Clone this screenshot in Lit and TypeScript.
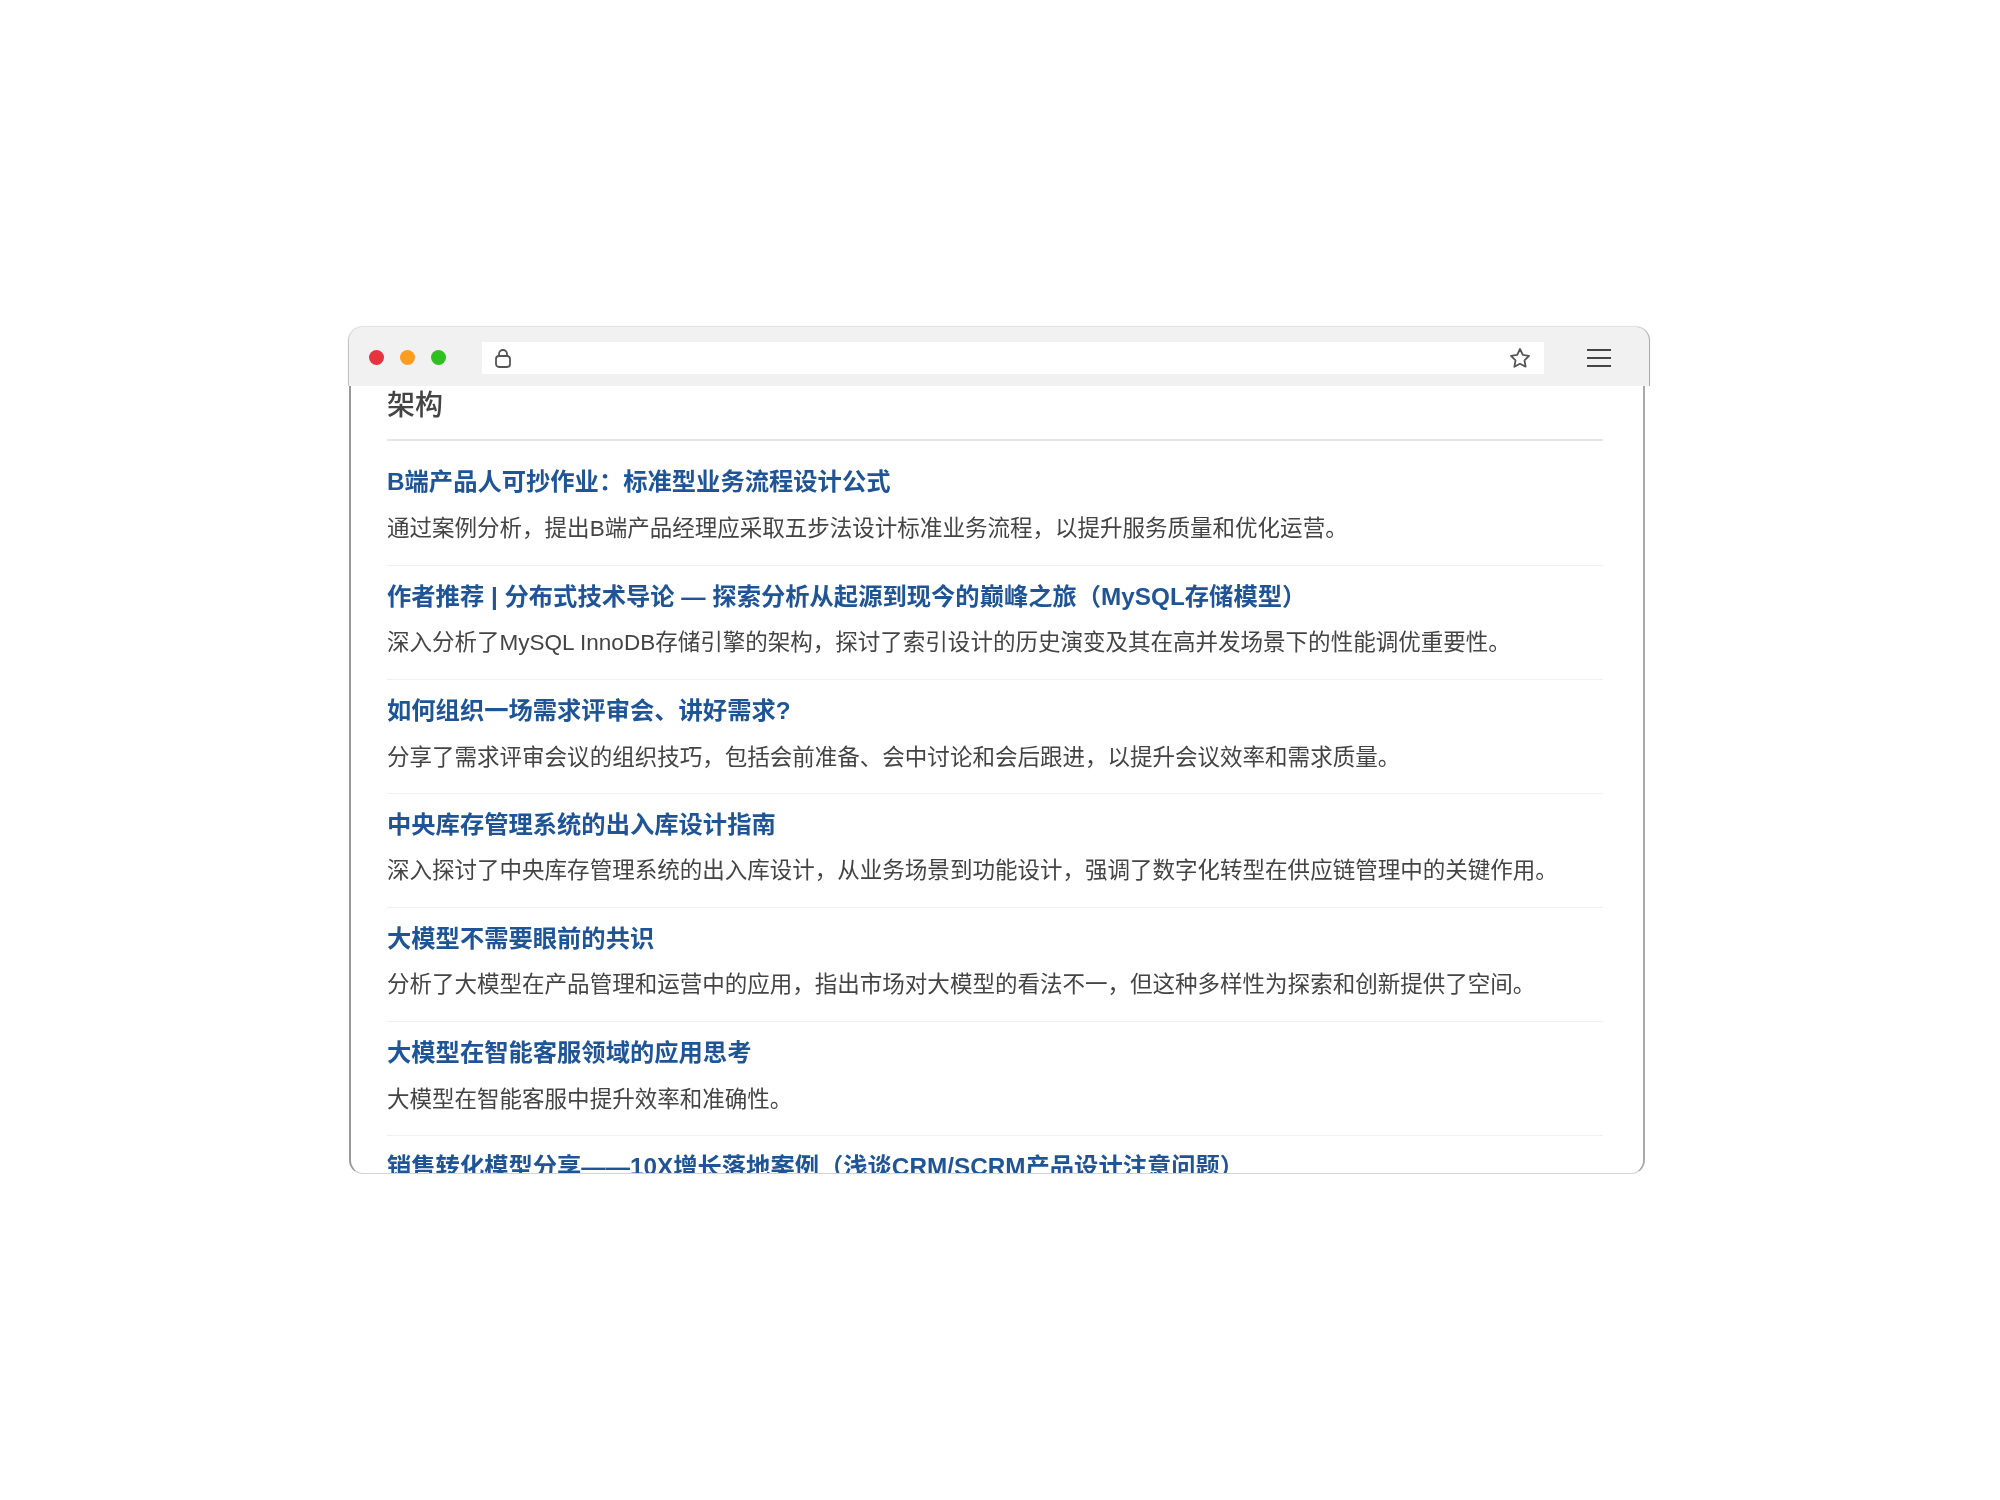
import { LitElement, html, css } from "lit";
import { customElement } from "lit/decorators.js";

const items: [string, string, string][] = [
  ["B端产品人可抄作业\uFF1A标准型业务流程设计公式", "通过案例分析\uFF0C提出B端产品经理应采取五步法设计标准业务流程\uFF0C以提升服务质量和优化运营。", "wide"],
  ["作者推荐 | 分布式技术导论 — 探索分析从起源到现今的巅峰之旅\uFF08MySQL存储模型\uFF09", "深入分析了MySQL InnoDB存储引擎的架构\uFF0C探讨了索引设计的历史演变及其在高并发场景下的性能调优重要性。", ""],
  ["如何组织一场需求评审会、讲好需求?", "分享了需求评审会议的组织技巧\uFF0C包括会前准备、会中讨论和会后跟进\uFF0C以提升会议效率和需求质量。", "wide"],
  ["中央库存管理系统的出入库设计指南", "深入探讨了中央库存管理系统的出入库设计\uFF0C从业务场景到功能设计\uFF0C强调了数字化转型在供应链管理中的关键作用。", ""],
  ["大模型不需要眼前的共识", "分析了大模型在产品管理和运营中的应用\uFF0C指出市场对大模型的看法不一\uFF0C但这种多样性为探索和创新提供了空间。", ""],
  ["大模型在智能客服领域的应用思考", "大模型在智能客服中提升效率和准确性。", "wide"],
  ["销售转化模型分享——10X增长落地案例\uFF08浅谈CRM/SCRM产品设计注意问题\uFF09", "", ""],
];

@customElement("app-root")
export class AppRoot extends LitElement {
  static styles = css`
    :host { display: block; height: 1500px; background: #fff; padding: 327px 0 0 349px; box-sizing: border-box;
      font-family: "Liberation Sans", "Noto Sans CJK SC", sans-serif; }
    .window { width: 1301px; }
    .toolbar { height: 59px; background: #f1f1f1; border-radius: 14px 14px 0 0; display: flex; align-items: center;
      padding: 2px 0 0 20px; box-sizing: border-box; box-shadow: 0 -1px 1px #e0e0e0, -1px 0 1px #bbb; border-right: 1px solid #aaa; }
    .dot { width: 15px; height: 15px; border-radius: 50%; margin-right: 16px; flex: none; }
    .red { background: #e6333f; } .orange { background: #fd9d1f; } .green { background: #2fbf1f; }
    .address { margin-left: 20px; flex: none; width: 1062px; height: 32px; background: #fff; display: flex; align-items: center;
      justify-content: space-between; padding: 0 13px 0 12px; box-sizing: border-box; }
    .menu { margin-left: 43px; display: block; flex: none; }
    svg { display: block; }
    .page { width: 1296px; height: 788px; box-sizing: border-box; overflow: hidden; background: #fff;
      border-left: 2px solid #999; border-right: 2px solid #aaa; border-bottom: 1px solid #d4d4d4;
      border-radius: 0 0 14px 14px; padding: 0 40px 0 36px; color: #444; }
    .inner { filter: blur(0.4px); }
    h2 { margin: 0; font-size: 28px; line-height: 40px; height: 55px; font-weight: 500; color: #444;
      border-bottom: 2px solid #e6e6e6; box-sizing: border-box; }
    .item { height: 114px; padding-top: 15px; border-bottom: 1px solid #f0f0f0; box-sizing: border-box; }
    .item:first-of-type { height: 125px; padding-top: 25px; }
    .t { font-size: 24.3px; line-height: 32px; font-weight: 700; color: #1f5597; white-space: nowrap; }
    .d { font-size: 22.53px; line-height: 32px; margin-top: 14px; color: #444; white-space: nowrap; }
    .wide .d { margin-top: 15px; }
  `;
  render() {
    return html`
      <div class="window">
        <div class="toolbar">
          <span class="dot red"></span><span class="dot orange"></span><span class="dot green"></span>
          <div class="address">
            <svg width="18" height="20" viewBox="0 0 18 20" fill="none" stroke="#555" stroke-width="1.8"><rect x="2" y="8" width="14" height="11" rx="3"/><path d="M5 8V6a4 4 0 0 1 8 0v2"/></svg>
            <svg width="22" height="22" viewBox="0 0 22 22" fill="none" stroke="#555" stroke-width="1.8" stroke-linejoin="round"><path d="M11 2l2.8 5.9 6.2.9-4.5 4.5 1.1 6.4L11 16.7l-5.6 3 1.1-6.4L2 8.8l6.2-.9z"/></svg>
          </div>
          <svg class="menu" width="24" height="20" viewBox="0 0 24 20" stroke="#444" stroke-width="2"><path d="M0 2h24M0 10h24M0 18h24"/></svg>
        </div>
        <div class="page">
          <div class="inner">
            <h2>架构</h2>
            ${items.map(([t, d, w]) => html`<div class="item ${w}"><div class="t">${t}</div><div class="d">${d}</div></div>`)}
          </div>
        </div>
      </div>
    `;
  }
}
